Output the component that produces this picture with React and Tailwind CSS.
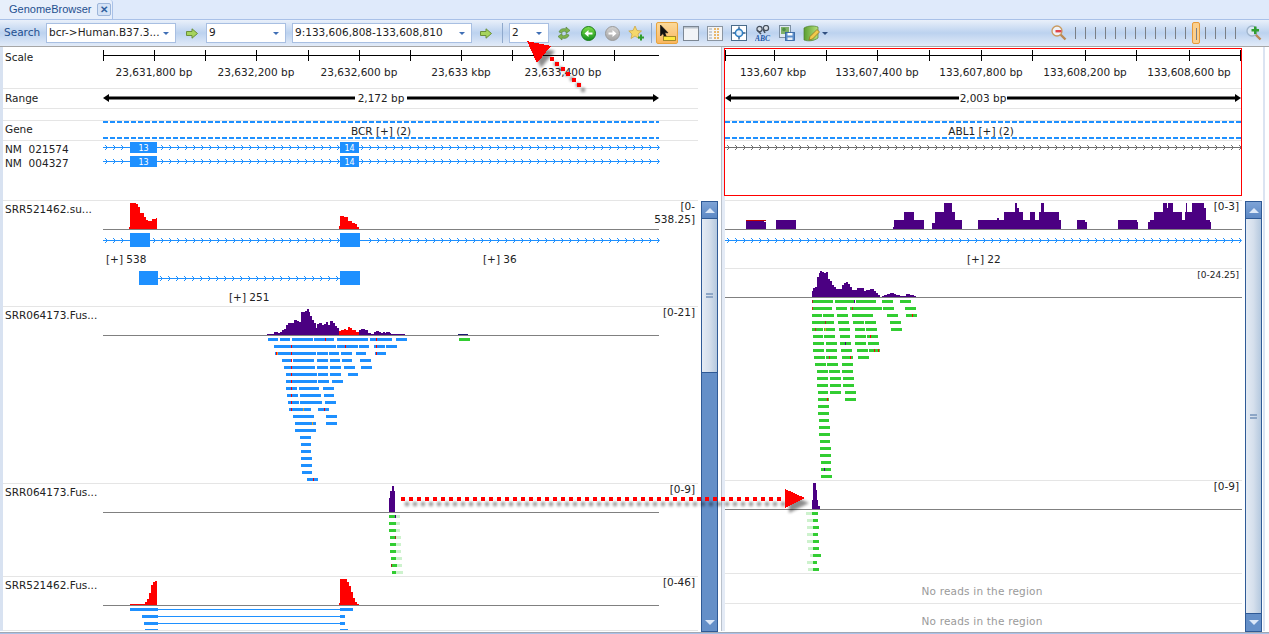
import React from 'react';

const BLUE = '#1e90ff';
const PURPLE = '#4b0082';
const RED = '#ff0000';
const GREEN = '#32cd32';
const PALE = '#cdf2cd';

// most shapes below were read off 3x crops, so they come in as crop coords + origin
const stepPath = (pts, end, ox, oy, base) => {
  let d = `M${ox + pts[0][0] / 3} ${base}`;
  pts.forEach(([x, top], i) => {
    const next = i + 1 < pts.length ? pts[i + 1][0] : end;
    d += `L${ox + x / 3} ${oy + top / 3}L${ox + next / 3} ${oy + top / 3}`;
  });
  return `${d}L${ox + end / 3} ${base}Z`;
};

const Area = ({ pts, end, ox, oy, base, fill }) => (
  <path d={stepPath(pts, end, ox, oy, base)} fill={fill} shapeRendering="crispEdges" />
);

const Reads = ({ rows, marks = [], ox, oy, z0, color }) => (
  <g shapeRendering="crispEdges">
    {rows.map((blocks, i) =>
      blocks.map(([a, b]) => (
        <rect key={`${i}-${a}`} x={ox + a / 3} y={oy + (z0 + 21 * i) / 3 - 1.5} width={(b - a) / 3} height={3} fill={color} />
      ))
    )}
    {marks.map(([row, x, c]) => (
      <rect key={`${row}-${x}`} x={ox + x / 3} y={oy + (z0 + 21 * row) / 3 - 1.5} width={1} height={3} fill={c} />
    ))}
  </g>
);

const GeneLine = ({ x1, x2, y, color = BLUE, skip = [] }) => {
  const arrows = [];
  for (let x = x1 + 2; x < x2 - 1; x += 8) {
    if (!skip.some(([a, b]) => x > a - 2 && x < b + 2)) arrows.push(x);
  }
  return (
    <g stroke={color} fill="none" strokeWidth="1">
      <path d={`M${x1} ${y + 0.5}H${x2}`} />
      <path d={arrows.map((x) => `M${x} ${y - 2}l2.5 2.5l-2.5 2.5`).join('')} />
    </g>
  );
};

const Exon = ({ x, w, y, h, n }) => (
  <g>
    <rect x={x} y={y} width={w} height={h} fill={BLUE} shapeRendering="crispEdges" />
    {n && (
      <text x={x + w / 2} y={y + 8.5} fontSize="8" fill="#fff" textAnchor="middle">
        {n}
      </text>
    )}
  </g>
);

const Row = ({ x, w, top, h, className, label, range, children }) => (
  <div className={`relative flex shrink-0 justify-between overflow-hidden border-b border-[#e5e5e5] pl-[2px] text-[10.5px] leading-[14px] text-[#222] ${className}`}>
    <svg
      className="absolute left-0 top-0 font-['DejaVu_Sans',sans-serif]"
      width={w}
      height={h}
      viewBox={`${x} ${top} ${w} ${h}`}
    >
      {children}
    </svg>
    <span className="relative whitespace-pre">{label}</span>
    {range && <span className="relative mr-[3px] -mt-[2px] w-[52px] text-right leading-[13px]">{range}</span>}
  </div>
);

const Axis = ({ x1, x2, ticks, labels }) => (
  <g>
    <path d={`M${x1} 55.5H${x2}`} stroke="#000" />
    {ticks.map((t) => (
      <path key={t} d={`M${t + 0.5} 50V61`} stroke="#000" />
    ))}
    {labels.map(([t, s]) => (
      <text key={s} x={t} y={76} fontSize="10.5" fill="#222" textAnchor="middle">
        {s}
      </text>
    ))}
  </g>
);

const RangeBar = ({ x1, a, b, x2, cx, text }) => (
  <g>
    <path d={`M${x1 + 3} 98H${a}M${b} 98H${x2 - 3}`} stroke="#000" strokeWidth="3" />
    <path d={`M${x1} 98l6 -4v8zM${x2} 98l-6 -4v8z`} fill="#000" />
    <text x={cx} y={102} fontSize="10.5" fill="#222" textAnchor="middle">
      {text}
    </text>
  </g>
);

const GeneDash = ({ x1, x2, y }) => (
  <path d={`M${x1} ${y}H${x2}`} stroke={BLUE} strokeWidth="2" strokeDasharray="5 2" />
);

const PlusCount = ({ x, y, text }) => (
  <text x={x} y={y} fontSize="10.5" fill="#222">
    {text}
  </text>
);

const Scrollbar = ({ thumbClass, rest }) => (
  <div className="flex h-[431px] w-[17px] shrink-0 flex-col border border-[#2f5a96] bg-[#648fc8]">
    <div className="flex h-[17px] shrink-0 items-center justify-center border-b border-[#2f5a96] bg-gradient-to-b from-[#7ea3d6] to-[#5c88c4]">
      <span className="h-0 w-0 border-x-[5px] border-b-[5px] border-x-transparent border-b-[#dce8f8]" />
    </div>
    <div className={`flex shrink-0 items-center justify-center border-b border-[#2f5a96] bg-gradient-to-r from-[#e4ebf4] via-[#d5dfec] to-[#b4c8de] ${thumbClass}`}>
      <span className="h-[5px] w-[7px] border-y-2 border-[#8da6c6]" />
    </div>
    {rest && <div className="flex-1" />}
    <div className="mt-auto flex h-[17px] shrink-0 items-center justify-center bg-[#648fc8]">
      <span className="h-0 w-0 border-x-[5px] border-t-[5px] border-x-transparent border-t-[#dce8f8]" />
    </div>
  </div>
);

const Combo = ({ className, text }) => (
  <div className={`flex h-[20px] shrink-0 items-center justify-between border border-[#a8bfe2] bg-white pl-[2px] pr-[6px] text-[10.5px] text-[#222] ${className}`}>
    <span className="whitespace-nowrap">{text}</span>
    <span className="h-0 w-0 border-x-[3px] border-t-[3px] border-x-transparent border-t-[#3f6fb5]" />
  </div>
);

const GoArrow = ({ className }) => (
  <svg className={`shrink-0 ${className}`} width="12" height="11" viewBox="0 0 12 11">
    <path d="M0.5 3.5H6V0.8L11.5 5.5L6 10.2V7.5H0.5Z" fill="#a6d45c" stroke="#6b8f3a" />
  </svg>
);

const RefreshIcon = ({ className }) => (
  <svg className={`shrink-0 ${className}`} width="14" height="15" viewBox="0 0 14 15">
    <path d="M2 6C3 3 6 2 9 3V1L13 4.5L9 7.5V5.5C7 5 5 5.5 4.5 7Z" fill="#7fb24e" stroke="#4f7f33" strokeWidth="0.6" />
    <path d="M12 9C11 12 8 13 5 12V14L1 10.5L5 7.5V9.5C7 10 9 9.5 9.5 8Z" fill="#7fb24e" stroke="#4f7f33" strokeWidth="0.6" />
  </svg>
);

const CircleNav = ({ id, className, from, to, edge, flip }) => (
  <svg className={`shrink-0 ${className}`} width="15" height="15" viewBox="0 0 15 15">
    <defs>
      <linearGradient id={id} x1="0" y1="0" x2="0" y2="1">
        <stop offset="0" stopColor={from} />
        <stop offset="1" stopColor={to} />
      </linearGradient>
    </defs>
    <circle cx="7.5" cy="7.5" r="7" fill={`url(#${id})`} stroke={edge} />
    <path
      d={flip ? 'M3.5 6.5H7.5V4L11.5 7.5L7.5 11V8.5H3.5Z' : 'M11.5 6.5H7.5V4L3.5 7.5L7.5 11V8.5H11.5Z'}
      fill="#fff"
    />
  </svg>
);

const StarAdd = ({ className }) => (
  <svg className={`shrink-0 ${className}`} width="16" height="16" viewBox="0 0 16 16">
    <path d="M7 1L9 5.5L13.5 6L10 9L11 13.5L7 11L3 13.5L4 9L0.8 6L5 5.5Z" fill="#f5d76a" stroke="#c8a23c" strokeWidth="0.7" />
    <path d="M10 11.5H12V9.5H14V11.5H16V13.5H14V15.5H12V13.5H10Z" fill="#2f9e2f" />
  </svg>
);

const ToolSep = ({ className }) => <div className={`h-[20px] w-px shrink-0 bg-[#8fa9cc] ${className}`} />;

const CursorButton = () => (
  <div className="ml-[4px] flex h-[22px] w-[22px] shrink-0 items-center justify-center rounded-[2px] border border-[#e8a33c] bg-gradient-to-b from-[#fbd99a] to-[#f9b65f]">
    <svg width="17" height="18" viewBox="0 0 17 18">
      <path d="M1.5 1V12L4 9.5L6 14L7.5 13L5.8 8.8H9Z" fill="#111" stroke="#111" strokeWidth="0.6" />
      <rect x="4.5" y="12.5" width="12" height="4" fill="#ffe93c" stroke="#8a7a20" strokeWidth="0.8" />
    </svg>
  </div>
);

const WindowIcon = () => (
  <svg className="ml-[5px] shrink-0" width="16" height="15" viewBox="0 0 16 15">
    <rect x="0.5" y="0.5" width="15" height="14" fill="#f2f4f7" stroke="#7c8794" />
    <rect x="1" y="1" width="14" height="1.5" fill="#b9c2cc" />
  </svg>
);

const GridIcon = () => (
  <svg className="ml-[8px] shrink-0" width="16" height="15" viewBox="0 0 16 15">
    <rect x="0.5" y="0.5" width="15" height="14" fill="#f3f4f6" stroke="#8b95a1" />
    <path d="M2 3h3M2 6h3M2 9h3M2 12h3" stroke="#9aa6b2" />
    <path d="M7 3h6M7 6h6M7 9h6M7 12h6" stroke="#e5a23e" strokeWidth="1.6" strokeDasharray="2 1" />
  </svg>
);

const TargetIcon = () => (
  <svg className="ml-[8px] shrink-0" width="16" height="16" viewBox="0 0 16 16">
    <rect x="0.5" y="0.5" width="15" height="15" fill="#fff" stroke="#4a6b8a" />
    <circle cx="8" cy="8" r="3.6" fill="#e8f2fb" stroke="#2f7fc4" strokeWidth="1.6" />
    <path d="M8 1.5V4M8 12V14.5M1.5 8H4M12 8H14.5" stroke="#2f5f8f" strokeWidth="1.4" />
  </svg>
);

const FindAbcIcon = () => (
  <svg className="ml-[8px] shrink-0" width="16" height="16" viewBox="0 0 16 16">
    <circle cx="4.5" cy="4" r="2.6" fill="#d7dee6" stroke="#454f5c" strokeWidth="1.2" />
    <circle cx="11" cy="3" r="2.6" fill="#d7dee6" stroke="#454f5c" strokeWidth="1.2" />
    <path d="M2 5L6 9M8 4L10 8" stroke="#454f5c" strokeWidth="1.6" />
    <text x="0" y="15.5" fontSize="7.5" fontFamily="'Liberation Serif', serif" fontStyle="italic" fontWeight="bold" fill="#2257a8">
      ABC
    </text>
  </svg>
);

const SaveImageIcon = () => (
  <svg className="ml-[8px] shrink-0" width="16" height="16" viewBox="0 0 16 16">
    <rect x="0.5" y="0.5" width="11" height="12" fill="#dfe9f3" stroke="#7d8fa3" />
    <rect x="2" y="2" width="8" height="7" fill="#7fb069" />
    <circle cx="5" cy="4.5" r="1.8" fill="#4f8f46" />
    <rect x="6.5" y="7.5" width="9" height="8" fill="#5c8ecb" stroke="#2f5f9e" strokeWidth="0.8" />
    <rect x="8.5" y="8" width="5" height="2.5" fill="#fff" />
    <rect x="8.5" y="12.5" width="5" height="2.5" fill="#e9eef5" />
  </svg>
);

const EditCubeIcon = () => (
  <svg className="ml-[8px] shrink-0" width="18" height="17" viewBox="0 0 18 17">
    <defs>
      <linearGradient id="cube" x1="0" y1="0" x2="1" y2="0">
        <stop offset="0" stopColor="#5a9e32" />
        <stop offset="1" stopColor="#b5e07a" />
      </linearGradient>
    </defs>
    <path d="M1 3C5 0.5 11 0.5 15 2V13C11 16 5 16.5 1 15Z" fill="url(#cube)" stroke="#4f7f2e" strokeWidth="0.7" />
    <path d="M6 15L7 11.5L14 4.5L16.5 7L9.5 14Z" fill="#f1c94a" stroke="#8a6a1e" strokeWidth="0.7" />
  </svg>
);

const Zoomer = ({ plus, className }) => (
  <svg className={`shrink-0 ${className}`} width="16" height="16" viewBox="0 0 16 16">
    <path d="M9.5 9.5L14.5 14.5" stroke="#b98a55" strokeWidth="2.4" />
    <circle cx="6" cy="6" r="5" fill={plus ? '#dbe7f5' : '#eef2f7'} stroke={plus ? '#9fb4cc' : '#c99a5f'} strokeWidth="1.3" />
    {plus ? (
      <path d="M6.5 7.5H9V5H11.5V7.5H14V10H11.5V12.5H9V10H6.5Z" fill="#2f9e2f" transform="translate(-1 -3.5)" />
    ) : (
      <rect x="4.5" y="5" width="6" height="2.4" fill="#e0454a" />
    )}
  </svg>
);

const ZoomSlider = () => {
  const ticks = Array.from({ length: 17 }, (_, i) => i);
  return (
    <div className="relative ml-[8px] flex h-[22px] w-[161px] shrink-0 items-center justify-between">
      {ticks.map((t) => (
        <span key={t} className="h-[12px] w-px bg-[#7a7f86]" />
      ))}
      <span className="absolute left-[117px] top-0 flex h-[22px] w-[8px] justify-center rounded-[2px] border border-[#e79a3a] bg-[#fbcf8d]">
        <span className="mt-[5px] h-[12px] w-px bg-[#7a7f86]" />
      </span>
    </div>
  );
};

const Toolbar = () => (
  <div className="flex h-[27px] items-center border-t border-[#a9c1e8] bg-gradient-to-b from-[#e9f0fa] via-[#bcd2ef] to-[#e2ebf8] pl-[4px] text-[10.5px]">
    <span className="w-[42px] shrink-0 text-[#1f4f8f]">Search</span>
    <Combo className="w-[130px]" text="bcr->Human.B37.3..." />
    <GoArrow className="ml-[10px]" />
    <Combo className="ml-[8px] w-[80px]" text="9" />
    <Combo className="ml-[6px] w-[180px]" text="9:133,606,808-133,608,810" />
    <GoArrow className="ml-[8px]" />
    <ToolSep className="ml-[10px]" />
    <Combo className="ml-[6px] w-[40px]" text="2" />
    <RefreshIcon className="ml-[8px]" />
    <CircleNav id="navOn" className="ml-[10px]" from="#7fe04a" to="#128f1e" edge="#1b7a1b" />
    <CircleNav id="navOff" className="ml-[9px]" from="#d2d2d2" to="#a4a4a4" edge="#9a9a9a" flip />
    <StarAdd className="ml-[8px]" />
    <ToolSep className="ml-[7px]" />
    <CursorButton />
    <WindowIcon />
    <GridIcon />
    <TargetIcon />
    <FindAbcIcon />
    <SaveImageIcon />
    <EditCubeIcon />
    <span className="ml-[1px] h-0 w-0 shrink-0 border-x-[3px] border-t-[3px] border-x-transparent border-t-[#2f4f80]" />
    <Zoomer className="ml-[223px]" />
    <ZoomSlider />
    <Zoomer plus className="ml-[10px]" />
  </div>
);

const TabBar = () => (
  <div className="flex h-[19px] items-end bg-[#dfeafb]">
    <div className="flex h-[19px] w-[113px] items-center rounded-tr-[3px] border-r border-[#a9c1e8] bg-[#e7effb] pl-[9px] font-['Liberation_Sans',sans-serif] text-[11px] text-[#1f4f8f]">
      <span className="w-[88px]">GenomeBrowser</span>
      <span className="flex h-[13px] w-[14px] items-center justify-center rounded-[2px] border border-[#9db6da] bg-[#d5e3f6] text-[10px] font-bold leading-none text-[#2f5f9e]">
        ✕
      </span>
    </div>
  </div>
);

/* left pane data */
const leftReads = [
  [[24, 54], [60, 90], [96, 159], [162, 222], [231, 324], [330, 396], [408, 441]],
  [[42, 228], [231, 294], [297, 327], [342, 375], [378, 411]],
  [[45, 168], [171, 204], [207, 237], [243, 276], [288, 318], [345, 378]],
  [[66, 96], [99, 162], [171, 204], [210, 240], [246, 276], [300, 333]],
  [[72, 165], [171, 204], [210, 243], [252, 285], [303, 336]],
  [[78, 171], [174, 204], [210, 243], [264, 294]],
  [[78, 171], [174, 207], [216, 249]],
  [[78, 111], [117, 177], [189, 222]],
  [[81, 114], [120, 183], [192, 222]],
  [[84, 117], [120, 186], [195, 228]],
  [[87, 153], [174, 207]],
  [[99, 162], [198, 231]],
  [[105, 168], [198, 231]],
  [[105, 168]],
  [[120, 153]],
  [[123, 153]],
  [[123, 153]],
  [[123, 156]],
  [[123, 156]],
  [[126, 156]],
  [[141, 174]],
];
const leftMarks = [
  [0, 196, RED], [0, 349, RED], [1, 94, RED], [1, 256, RED], [1, 349, RED], [2, 47, RED], [2, 50, '#f0a020'],
  [2, 94, RED], [2, 349, RED], [3, 94, RED], [4, 94, RED], [5, 94, RED], [6, 94, RED], [7, 94, RED], [8, 94, RED],
  [9, 94, RED], [10, 94, RED], [10, 129, '#f0a020'], [10, 193, RED], [12, 155, '#f0a020'], [20, 160, RED],
];
const leftCovA = [
  [21, 102], [42, 96], [54, 99], [60, 96], [66, 90], [72, 87], [78, 75], [84, 70], [96, 69], [102, 60], [111, 63],
  [117, 66], [123, 36], [135, 34], [141, 28], [147, 36], [150, 48], [156, 60], [162, 69], [168, 84], [171, 72],
  [177, 69], [186, 75], [192, 72], [198, 66], [204, 75], [210, 63], [219, 69], [225, 78], [231, 84],
];
const leftCovRed = [
  [237, 93], [243, 90], [252, 87], [258, 90], [264, 81], [270, 84], [276, 90], [288, 96],
];
const leftCovB = [
  [297, 90], [303, 87], [315, 90], [324, 99], [333, 102], [342, 96], [348, 93], [357, 96], [363, 99], [369, 96],
  [375, 99], [378, 96], [390, 99], [393, 102],
];

/* right pane data */
const rightReads = [
  [[36, 99], [105, 165], [168, 228], [246, 279], [300, 333]],
  [[36, 96], [108, 141], [150, 246], [249, 282], [315, 348]],
  [[36, 66], [69, 102], [111, 144], [156, 219], [261, 294], [318, 351]],
  [[36, 75], [75, 102], [114, 147], [159, 192], [195, 228], [270, 303]],
  [[36, 69], [72, 105], [117, 150], [165, 195], [198, 231], [273, 306]],
  [[39, 69], [72, 105], [120, 150], [165, 198], [201, 234]],
  [[39, 72], [78, 111], [120, 153], [165, 198], [204, 237]],
  [[39, 72], [78, 111], [123, 156], [171, 204], [207, 240]],
  [[42, 75], [78, 111], [126, 159], [174, 207]],
  [[45, 78], [81, 114], [126, 159]],
  [[51, 84], [87, 120], [126, 159]],
  [[51, 84], [90, 123], [129, 162]],
  [[51, 84], [90, 123], [129, 162]],
  [[54, 84], [90, 123], [135, 168]],
  [[54, 87], [135, 168]],
  [[54, 87]],
  [[54, 87]],
  [[57, 87]],
  [[57, 90]],
  [[57, 90]],
  [[60, 90]],
  [[60, 93]],
  [[60, 93]],
  [[63, 93]],
  [[63, 93]],
  [[63, 96]],
];
const rightMarks = [
  [0, 36, '#a03020'], [0, 162, PURPLE], [1, 36, '#c03020'], [1, 155, '#c03020'], [2, 337, RED], [3, 75, '#a03020'],
  [4, 45, '#c03020'], [4, 75, '#f0a020'], [5, 211, RED], [6, 135, PURPLE], [7, 223, RED], [7, 235, RED],
  [8, 87, '#c03020'], [8, 150, RED], [14, 81, RED], [24, 72, PURPLE],
];
const rightCov = [
  [33, 96], [36, 78], [39, 68], [45, 65], [51, 36], [57, 24], [60, 18], [66, 21], [72, 24], [78, 21], [84, 42], [90, 48],
  [96, 60], [102, 66], [108, 72], [126, 60], [132, 54], [138, 51], [144, 57], [150, 66], [156, 75], [171, 69], [192, 78],
  [198, 75], [210, 72], [222, 78], [228, 84], [234, 90], [240, 96], [246, 93], [252, 90], [261, 87], [270, 84], [282, 87],
  [288, 90], [300, 93], [318, 87], [330, 90], [342, 93],
];
const rightTrack1 = [
  { pts: [[0, 66], [12, 39], [36, 66], [45, 90]], end: 66 },
  { pts: [[115, 90], [171, 84], [177, 90], [192, 66], [225, 39], [231, 54], [237, 66], [249, 90], [270, 66], [285, 90], [297, 66], [303, 39], [312, 66], [357, 90]], end: 363 },
  { pts: [[412, 90], [435, 96]], end: 441 },
  { pts: [[534, 90], [591, 96]], end: 594 },
  { pts: [[624, 96], [630, 90], [642, 66], [669, 39], [681, 54], [684, 39], [699, 66], [726, 90], [735, 66], [738, 39], [741, 66], [756, 39], [792, 54], [798, 90], [810, 96]], end: 813 },
];

const leftTrack3 = [
  [1167, 1185, 1200], [1167, 1188, 1200], [1167, 1188, 1200], [1170, 1188, 1203], [1170, 1188, 1203],
  [1170, 1188, 1203], [1173, 1188, 1206], [1173, 1191, 1206], [1176, 1188, 1209],
];
const rightTrack3 = [
  [498, 516, 534], [501, 519, 534], [501, 519, 537], [501, 519, 534], [501, 519, 537],
  [504, 519, 537], [510, 519, 543], [501, 519, 531], [504, 519, 537],
];

const LeftPane = () => {
  const x = 3;
  const w = 695;
  return (
    <div className="w-[715px] shrink-0">
      <div className="w-[695px]">
        <Row x={x} w={w} top={47} h={42} className="h-[42px] pt-[3px]" label="Scale">
          <Axis
            x1={103}
            x2={659}
            ticks={[103, 154, 205, 256, 308, 359, 410, 461, 512, 563, 614]}
            labels={[[154, '23,631,800 bp'], [256, '23,632,200 bp'], [359, '23,632,600 bp'], [461, '23,633 kbp'], [563, '23,633,400 bp']]}
          />
        </Row>
        <Row x={x} w={w} top={89} h={20} className="h-[20px] pt-[2px]" label="Range">
          <RangeBar x1={103} a={355} b={407} x2={659} cx={381} text="2,172 bp" />
        </Row>
        <Row x={x} w={w} top={109} h={12} className="h-[12px]" />
        <Row x={x} w={w} top={121} h={20} className="h-[20px] pt-px" label="Gene">
          <GeneDash x1={103} x2={659} y={122} />
          <GeneDash x1={103} x2={659} y={138} />
          <text x={381} y={135} fontSize="10.5" fill="#222" textAnchor="middle">BCR [+] (2)</text>
        </Row>
        <Row x={x} w={w} top={141} h={60} className="h-[60px] pt-px" label={'NM  021574\nNM  004327'}>
          {[147, 161].map((y) => (
            <g key={y}>
              <GeneLine x1={103} x2={659} y={y} skip={[[130, 157], [340, 359]]} />
              <Exon x={130} w={27} y={y - 5} h={11} n="13" />
              <Exon x={340} w={19} y={y - 5} h={11} n="14" />
            </g>
          ))}
        </Row>
      </div>
      <div className="flex gap-[3px]">
        <div className="w-[695px] shrink-0">
          <Row x={x} w={w} top={201} h={106} className="h-[106px] pt-px" label="SRR521462.su..." range="[0-538.25]">
            <Area fill={RED} ox={0} oy={100} base={229} end={471} pts={[[387, 380], [390, 309], [408, 312], [414, 322], [420, 338], [426, 340], [432, 350], [438, 360], [444, 362], [456, 356], [468, 354]]} />
            <Area fill={RED} ox={0} oy={100} base={229} end={1077} pts={[[1017, 378], [1020, 348], [1032, 352], [1044, 362], [1056, 368], [1065, 373], [1071, 380]]} />
            <path d="M103 229.5H659" stroke="#808080" />
            <GeneLine x1={103} x2={659} y={240} skip={[[130, 150], [340, 360]]} />
            <Exon x={130} w={20} y={233} h={14} />
            <Exon x={340} w={20} y={233} h={14} />
            <PlusCount x={106} y={263} text="[+] 538" />
            <PlusCount x={483} y={263} text="[+] 36" />
            <GeneLine x1={158} x2={340} y={278} />
            <Exon x={139} w={19} y={271} h={14} />
            <Exon x={340} w={20} y={271} h={14} />
            <PlusCount x={229} y={301} text="[+] 251" />
          </Row>
          <Row x={x} w={w} top={307} h={177} className="h-[177px] pt-px" label="SRR064173.Fus..." range="[0-21]">
            <Area fill={PURPLE} ox={260} oy={300} base={335} end={237} pts={leftCovA} />
            <Area fill={RED} ox={260} oy={300} base={335} end={297} pts={leftCovRed} />
            <Area fill={PURPLE} ox={260} oy={300} base={335} end={435} pts={leftCovB} />
            <Area fill="#191970" ox={260} oy={300} base={335} end={624} pts={[[594, 102]]} />
            <path d="M103 335.5H659" stroke="#808080" />
            <Reads rows={leftReads} marks={leftMarks} ox={260} oy={300} z0={118} color={BLUE} />
            <rect x={459} y={338} width={11} height={3} fill={GREEN} />
          </Row>
          <Row x={x} w={w} top={484} h={93} className="h-[93px] pt-px" label="SRR064173.Fus..." range="[0-9]">
            <Area fill={PURPLE} ox={0} oy={480} base={512} end={1186} pts={[[1165, 96], [1168, 55], [1171, 33], [1177, 18], [1183, 33]]} />
            <path d="M103 512.5H659" stroke="#808080" />
            <g shapeRendering="crispEdges">
              {leftTrack3.map(([a, b, c], i) => (
                <g key={i}>
                  <rect x={a / 3} y={515 + i * 7} width={(c - a) / 3} height={3} fill={PALE} />
                  <rect x={a / 3} y={515 + i * 7} width={(b - a) / 3} height={3} fill={GREEN} />
                </g>
              ))}
              <rect x={394.5} y={515} width={1} height={3} fill={PURPLE} />
              <rect x={395} y={536} width={1} height={3} fill="#a03020" />
              <rect x={391} y={564} width={1} height={3} fill="#a03020" />
            </g>
          </Row>
          <Row x={x} w={w} top={577} h={54} className="h-[54px] pt-px" label="SRR521462.Fus..." range="[0-46]">
            <Area fill={RED} ox={0} oy={480} base={605} end={471} pts={[[390, 372], [423, 372], [435, 366], [441, 357], [447, 339], [453, 315], [459, 306], [465, 303]]} />
            <Area fill={RED} ox={0} oy={480} base={605} end={1077} pts={[[1017, 370], [1020, 297], [1032, 298], [1041, 306], [1047, 318], [1053, 336], [1059, 354], [1065, 366], [1071, 372]]} />
            <path d="M103 605.5H659" stroke="#808080" />
            <g fill={BLUE} shapeRendering="crispEdges">
              <rect x={130} y={608} width={28} height={3} />
              <rect x={340} y={608} width={13} height={3} />
              <rect x={142} y={615} width={16} height={3} />
              <rect x={340} y={615} width={5} height={3} />
              <rect x={144} y={622} width={14} height={3} />
              <rect x={340} y={622} width={5} height={3} />
              <rect x={145} y={629} width={13} height={3} />
              <rect x={340} y={629} width={8} height={3} />
              <path d="M158 609h182M158 616h182M158 623h182M158 630h182" stroke={BLUE} fill="none" />
            </g>
          </Row>
        </div>
        <Scrollbar thumbClass="h-[154px]" rest />
      </div>
    </div>
  );
};

const NoReads = ({ className }) => (
  <div className={`flex shrink-0 items-center justify-center border-b border-[#e5e5e5] pr-[3px] font-['DejaVu_Sans',sans-serif] text-[10.5px] tracking-[0.2px] text-[#9a9a9a] ${className}`}>
    No reads in the region
  </div>
);

const RightPane = () => {
  const x = 725;
  const w = 517;
  return (
    <div className="relative w-[537px] shrink-0">
      <div className="w-[517px]">
        <Row x={x} w={w} top={47} h={42} className="h-[42px]">
          <Axis
            x1={725}
            x2={1241}
            ticks={[725, 774, 826, 877, 929, 981, 1032, 1085, 1136, 1189, 1240]}
            labels={[[773, '133,607 kbp'], [877, '133,607,400 bp'], [981, '133,607,800 bp'], [1085, '133,608,200 bp'], [1189, '133,608,600 bp']]}
          />
        </Row>
        <Row x={x} w={w} top={89} h={20} className="h-[20px]">
          <RangeBar x1={725} a={959} b={1007} x2={1241} cx={983} text="2,003 bp" />
        </Row>
        <Row x={x} w={w} top={109} h={12} className="h-[12px]" />
        <Row x={x} w={w} top={121} h={20} className="h-[20px]">
          <GeneDash x1={725} x2={1241} y={122} />
          <GeneDash x1={725} x2={1241} y={138} />
          <text x={981} y={135} fontSize="10.5" fill="#222" textAnchor="middle">ABL1 [+] (2)</text>
        </Row>
        <Row x={x} w={w} top={141} h={60} className="h-[60px]">
          <GeneLine x1={725} x2={1241} y={147} color="#707070" />
        </Row>
      </div>
      {/* selected region frame */}
      <div className="pointer-events-none absolute left-[-1px] top-px h-[148px] w-[518px] border border-[#ff0000]" />
      <div className="flex gap-[3px]">
        <div className="w-[517px] shrink-0">
          <Row x={x} w={w} top={201} h={68} className="h-[68px] pt-px" range="[0-3]">
            <rect x={746} y={220} width={20} height={1} fill="#c00000" />
            <Area fill={PURPLE} ox={640} oy={190} base={229} end={378} pts={[[318, 93], [372, 96]]} />
            <Area fill={PURPLE} ox={640} oy={190} base={229} end={468} pts={[[408, 90]]} />
            <Area fill={PURPLE} ox={640} oy={190} base={229} end={852} pts={[[759, 110], [762, 90], [792, 66], [822, 90]]} />
            <Area fill={PURPLE} ox={640} oy={190} base={229} end={900} pts={[[876, 100], [885, 66]]} />
            {rightTrack1.map((t) => (
              <Area key={t.end} fill={PURPLE} ox={940} oy={190} base={229} end={t.end} pts={t.pts} />
            ))}
            <path d="M725 229.5H1242" stroke="#808080" />
            <GeneLine x1={725} x2={1241} y={240} />
            <PlusCount x={967} y={263} text="[+] 22" />
          </Row>
          <Row x={x} w={w} top={269} h={212} className="h-[212px] pt-px" range={<span className="whitespace-nowrap text-[9px]">[0-24.25]</span>}>
            <Area fill={PURPLE} ox={800} oy={265} base={297} end={348} pts={rightCov} />
            <path d="M725 297.5H1242" stroke="#808080" />
            <Reads rows={rightReads} marks={rightMarks} ox={800} oy={265} z0={109} color={GREEN} />
          </Row>
          <Row x={x} w={w} top={481} h={93} className="h-[93px] pt-px" range="[0-9]">
            <Area fill={PURPLE} ox={640} oy={470} base={509} end={540} pts={[[516, 90], [519, 39], [528, 60], [531, 90], [534, 108]]} />
            <path d="M725 509.5H1242" stroke="#808080" />
            <g shapeRendering="crispEdges">
              {rightTrack3.map(([a, b, c], i) => (
                <g key={i}>
                  <rect x={640 + a / 3} y={512 + i * 7} width={(b - a) / 3} height={3} fill={PALE} />
                  <rect x={640 + b / 3} y={512 + i * 7} width={(c - b) / 3} height={3} fill={GREEN} />
                </g>
              ))}
            </g>
          </Row>
          <NoReads className="h-[30px] pt-[6px]" />
          <NoReads className="h-[27px] border-b-0 pt-[9px]" />
        </div>
        <Scrollbar thumbClass="flex-1" />
      </div>
    </div>
  );
};

// the two red dotted arrows are drawn over everything, shadow first
const Annotations = () => {
  const across = [];
  for (let x = 401; x < 786; x += 8) across.push(x);
  const diagonal = [[550, 57], [555, 62], [561, 67], [566, 72], [572, 78], [577, 83]];
  const dots = (
    <>
      {across.map((x) => (
        <rect key={x} x={x} y={497} width={4} height={4} />
      ))}
      {diagonal.map(([a, b]) => (
        <rect key={a} x={a} y={b} width={4} height={4} />
      ))}
      <polygon points="785,489 805,498 785,508" />
      <polygon points="527,41 551,46 537,63" />
    </>
  );
  return (
    <svg className="pointer-events-none absolute left-0 top-0" width="1269" height="634">
      <defs>
        <filter id="soft" x="-10%" y="-10%" width="120%" height="120%">
          <feGaussianBlur stdDeviation="1.6" />
        </filter>
      </defs>
      <g fill="#000" opacity="0.45" filter="url(#soft)" transform="translate(4 5)">
        {dots}
      </g>
      <g fill={RED} shapeRendering="crispEdges">{dots}</g>
    </svg>
  );
};

export default function App() {
  return (
    <div className="relative h-[634px] w-[1269px] overflow-hidden bg-white font-['DejaVu_Sans',sans-serif]">
      <TabBar />
      <Toolbar />
      <div className="flex h-[586px] border-t border-[#a6a6a6] bg-white pb-[1px]">
        <div className="w-[3px] shrink-0 bg-[#d8e2f1]" />
        <LeftPane />
        <div className="ml-[3px] h-full w-px shrink-0 bg-[#b9c1cc]" />
        <div className="h-full w-[3px] shrink-0 bg-[#e4ebf6]" />
        <RightPane />
        <div className="ml-px h-full w-[2px] shrink-0 bg-[#dbe4f2]" />
      </div>
      <div className="h-[2px] border-t border-[#a0a8b4] bg-[#a9c1e8]" />
      <Annotations />
    </div>
  );
}
